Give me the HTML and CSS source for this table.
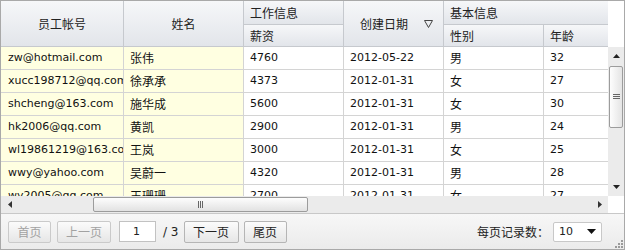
FILE: index.html
```html
<!DOCTYPE html>
<html>
<head>
<meta charset="utf-8">
<link rel="stylesheet" href="styles.css">
</head>
<body>
<div class="grid">
  <div class="main">
    <div class="left">
      <div class="head">
        <div class="hc h-acc">员工帐号</div>
        <div class="hc h-name">姓名</div>
        <div class="hc h-work">工作信息</div>
        <div class="hc h-sal">薪资</div>
        <div class="hc h-date"><span class="date-label">创建日期</span>
          <svg class="sort" width="9" height="8" viewBox="0 0 9 8"><path d="M0.5 0.5 H8.5 L4.5 7.5 Z" fill="none" stroke="#444" stroke-width="1"/></svg>
        </div>
        <div class="hc h-basic">基本信息</div>
        <div class="hc h-sex">性别</div>
        <div class="hc h-age">年龄</div>
      </div>
      <div class="body">
        <div class="row"><div class="c fz">zw@hotmail.com</div><div class="c fz zh">张伟</div><div class="c">4760</div><div class="c">2012-05-22</div><div class="c zh">男</div><div class="c">32</div></div>
        <div class="row"><div class="c fz">xucc198712@qq.com</div><div class="c fz zh">徐承承</div><div class="c">4373</div><div class="c">2012-01-31</div><div class="c zh">女</div><div class="c">27</div></div>
        <div class="row"><div class="c fz">shcheng@163.com</div><div class="c fz zh">施华成</div><div class="c">5600</div><div class="c">2012-01-31</div><div class="c zh">女</div><div class="c">30</div></div>
        <div class="row"><div class="c fz">hk2006@qq.com</div><div class="c fz zh">黄凯</div><div class="c">2900</div><div class="c">2012-01-31</div><div class="c zh">男</div><div class="c">24</div></div>
        <div class="row"><div class="c fz">wl19861219@163.com</div><div class="c fz zh">王岚</div><div class="c">3000</div><div class="c">2012-01-31</div><div class="c zh">女</div><div class="c">25</div></div>
        <div class="row"><div class="c fz">wwy@yahoo.com</div><div class="c fz zh">吴蔚一</div><div class="c">4320</div><div class="c">2012-01-31</div><div class="c zh">男</div><div class="c">28</div></div>
        <div class="row"><div class="c fz">wy2005@qq.com</div><div class="c fz zh">王珊珊</div><div class="c">2700</div><div class="c">2012-01-31</div><div class="c zh">女</div><div class="c">27</div></div>
      </div>
    </div>
    <div class="right">
      <div class="top-blank"></div>
      <div class="vscroll">
        <div class="vbtn"><svg width="7" height="4" viewBox="0 0 7 4"><path d="M0 4 L3.5 0 L7 4 Z" fill="#222"/></svg></div>
        <div class="vthumb"><svg width="7" height="6" viewBox="0 0 7 6"><path d="M0 0.5 H7 M0 2.5 H7 M0 4.5 H7" stroke="#666" stroke-width="1"/></svg></div>
        <div class="vfill"></div>
        <div class="vbtn"><svg width="7" height="4" viewBox="0 0 7 4"><path d="M0 0 L7 0 L3.5 4 Z" fill="#222"/></svg></div>
      </div>
    </div>
  </div>
  <div class="hbar">
    <div class="hscroll">
      <div class="hbtn"><svg width="4" height="7" viewBox="0 0 4 7"><path d="M4 0 L0 3.5 L4 7 Z" fill="#333"/></svg></div>
      <div class="hthumb"><svg width="6" height="7" viewBox="0 0 6 7"><path d="M0.5 0 V7 M2.5 0 V7 M4.5 0 V7" stroke="#666" stroke-width="1"/></svg></div>
      <div class="hfill"></div>
      <div class="hbtn"><svg width="4" height="7" viewBox="0 0 4 7"><path d="M0 0 L4 3.5 L0 7 Z" fill="#333"/></svg></div>
    </div>
    <div class="corner"></div>
  </div>
  <div class="pager">
    <div class="pbtn off w-first">首页</div>
    <div class="pbtn off w-prev">上一页</div>
    <div class="pinput">1</div>
    <div class="ptotal">/ 3</div>
    <div class="pbtn w-next">下一页</div>
    <div class="pbtn w-last">尾页</div>
    <div class="pspace"></div>
    <div class="plabel">每页记录数：</div>
    <div class="psel"><span class="psel-val">10</span><svg width="9" height="5" viewBox="0 0 9 5"><path d="M0 0 H9 L4.5 5 Z" fill="#111"/></svg></div>
    <div class="grip"><svg width="8" height="8" viewBox="0 0 8 8"><g fill="#9a9a9a"><rect x="6" y="0" width="2" height="2"/><rect x="3" y="3" width="2" height="2"/><rect x="6" y="3" width="2" height="2"/><rect x="0" y="6" width="2" height="2"/><rect x="3" y="6" width="2" height="2"/><rect x="6" y="6" width="2" height="2"/></g></svg></div>
  </div>
</div>
</body>
</html>
```

FILE: styles.css
```css
html, body {
  margin: 0;
  padding: 0;
  background: #ffffff;
}
.grid {
  width: 625px;
  height: 250px;
  box-sizing: border-box;
  border: 1px solid #a9a9a9;
  display: flex;
  flex-direction: column;
  font-family: "DejaVu Sans", "Noto Sans CJK SC", sans-serif;
  font-size: 11px;
  color: #111;
  background: #fff;
}
.zh, .hc, .pager {
  font-family: "Noto Sans CJK SC", "DejaVu Sans", sans-serif;
  font-size: 12px;
}
.main {
  display: flex;
  height: 195px;
}
.left {
  width: 607px;
  overflow: hidden;
  display: flex;
  flex-direction: column;
}
.head {
  display: grid;
  grid-template-columns: 123px 120px 100px 100px 100px 100px;
  grid-template-rows: 24px 22px;
  width: 643px;
}
.hc {
  box-sizing: border-box;
  border-right: 1px solid #c6c9ce;
  border-bottom: 1px solid #c6c9ce;
  background: linear-gradient(#f6f7f9, #e2e5ea);
  color: #222;
  display: flex;
  align-items: center;
  padding: 0 6px;
  white-space: nowrap;
  line-height: 1;
}
.h-acc { grid-column: 1; grid-row: 1 / 3; justify-content: center; }
.h-name { grid-column: 2; grid-row: 1 / 3; justify-content: center; }
.h-work { grid-column: 3; grid-row: 1; }
.h-sal { grid-column: 3; grid-row: 2; }
.h-date { grid-column: 4; grid-row: 1 / 3; padding-left: 16px; }
.date-label { flex: 1; }
.sort { margin-right: 4px; }
.h-basic { grid-column: 5 / 7; grid-row: 1; }
.h-sex { grid-column: 5; grid-row: 2; }
.h-age { grid-column: 6; grid-row: 2; }
.body {
  height: 149px;
  overflow: hidden;
}
.row {
  display: grid;
  grid-template-columns: 123px 120px 100px 100px 100px 100px;
  width: 643px;
  height: 23px;
  box-sizing: border-box;
  border-bottom: 1px solid #d4d4d4;
}
.c {
  box-sizing: border-box;
  border-right: 1px solid #d4d4d4;
  padding: 0 2px 0 6px;
  line-height: 22px;
  white-space: nowrap;
  overflow: hidden;
}
.c:first-child { padding-left: 7px; }
.fz { background: #ffffe1; }
.right {
  width: 16px;
  display: flex;
  flex-direction: column;
}
.top-blank { height: 46px; background: #fff; }
.vscroll {
  flex: 1;
  background: #ebebeb;
  display: flex;
  flex-direction: column;
  align-items: center;
}
.vbtn {
  height: 18px;
  width: 16px;
  display: flex;
  align-items: center;
  justify-content: center;
}
.vthumb {
  margin-top: 1px;
  width: 14px;
  height: 62px;
  box-sizing: border-box;
  border: 1px solid #9c9c9c;
  border-radius: 2px;
  background: linear-gradient(90deg, #fdfdfd, #e4e4e4);
  display: flex;
  align-items: center;
  justify-content: center;
}
.vfill { flex: 1; }
.hbar {
  display: flex;
  height: 17px;
}
.hscroll {
  width: 607px;
  background: #ebebeb;
  display: flex;
  align-items: center;
}
.hbtn {
  width: 17px;
  height: 17px;
  display: flex;
  align-items: center;
  justify-content: center;
}
.hthumb {
  margin-left: 75px;
  width: 215px;
  height: 15px;
  box-sizing: border-box;
  border: 1px solid #9c9c9c;
  border-radius: 2px;
  background: linear-gradient(#fdfdfd, #e2e2e2);
  display: flex;
  align-items: center;
  justify-content: center;
}
.hfill { flex: 1; }
.corner {
  flex: 1;
  background: #fff;
}
.pager {
  flex: 1;
  border-top: 1px solid #c8c8c8;
  background: linear-gradient(#f7f7f7, #ebebeb);
  display: flex;
  align-items: center;
  padding: 0 0 0 7px;
  color: #222;
}
.pbtn {
  height: 22px;
  box-sizing: border-box;
  border: 1px solid #b5b5b5;
  border-radius: 2px;
  background: linear-gradient(#fbfbfb, #e6e6e6);
  display: flex;
  align-items: center;
  justify-content: center;
  margin-right: 6px;
}
.pbtn.off { color: #a2a2a2; border-color: #cacaca; }
.w-first { width: 43px; }
.w-prev { width: 54px; margin-right: 8px; }
.w-next { width: 55px; margin-right: 5px; }
.w-last { width: 43px; }
.pinput {
  width: 37px;
  height: 21px;
  box-sizing: border-box;
  border: 1px solid #c2c2c2;
  background: #fff;
  font-family: "DejaVu Sans", sans-serif;
  font-size: 11px;
  display: flex;
  align-items: center;
  padding-left: 13px;
}
.ptotal {
  font-family: "DejaVu Sans", sans-serif;
  font-size: 12px;
  margin: 0 5px 0 7px;
}
.pspace { flex: 1; }
.plabel { margin-right: 4px; }
.psel {
  width: 49px;
  height: 20px;
  box-sizing: border-box;
  border: 1px solid #c8c8c8;
  border-radius: 2px;
  background: #fff;
  display: flex;
  align-items: center;
  padding: 0 5px 0 5px;
  font-family: "DejaVu Sans", sans-serif;
  font-size: 11px;
}
.psel-val { flex: 1; }
.grip {
  align-self: flex-end;
  width: 16px;
  height: 12px;
  display: flex;
  justify-content: flex-end;
  align-items: flex-end;
  padding: 0 1px 1px 0;
  box-sizing: border-box;
  margin-left: 6px;
}
```
